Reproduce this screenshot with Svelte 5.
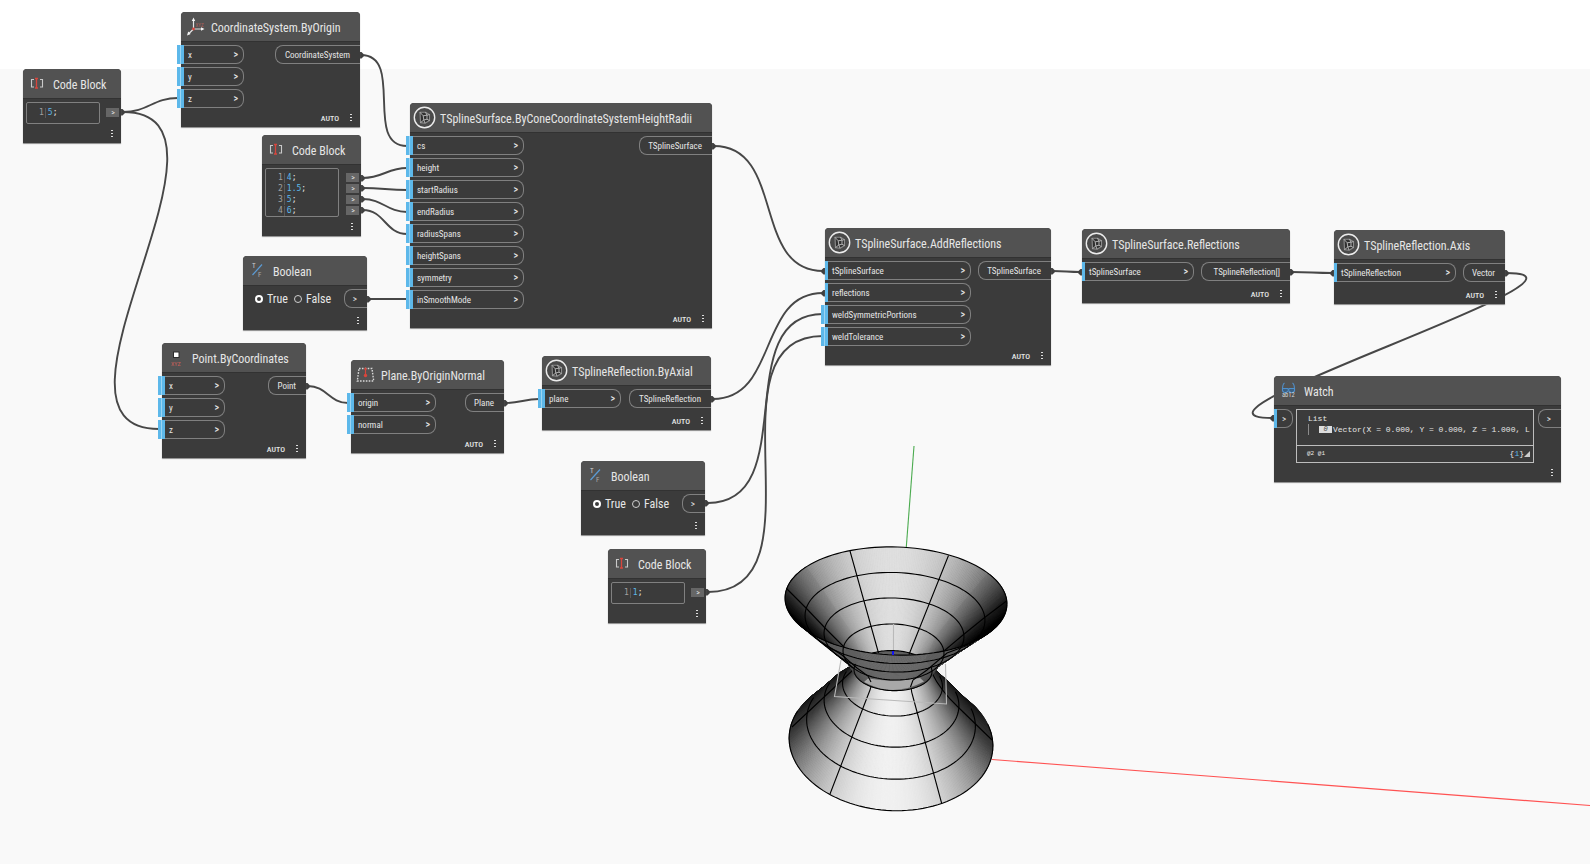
<script>
  const nodes = [
    { x: 181, y: 12, w: 179, title: 'CoordinateSystem.ByOrigin', icon: 'axes', ins: ['x', 'y', 'z'], inW: 63, out: 'CoordinateSystem', outW: 85 },
    { x: 410, y: 103, w: 302, title: 'TSplineSurface.ByConeCoordinateSystemHeightRadii', icon: 'tspline', ins: ['cs', 'height', 'startRadius', 'endRadius', 'radiusSpans', 'heightSpans', 'symmetry', 'inSmoothMode'], inW: 114, out: 'TSplineSurface', outW: 73 },
    { x: 162, y: 343, w: 144, title: 'Point.ByCoordinates', icon: 'point', ins: ['x', 'y', 'z'], inW: 63, out: 'Point', outW: 38 },
    { x: 351, y: 360, w: 153, title: 'Plane.ByOriginNormal', icon: 'plane', ins: ['origin', 'normal'], inW: 85, out: 'Plane', outW: 39 },
    { x: 542, y: 356, w: 169, title: 'TSplineReflection.ByAxial', icon: 'tspline', ins: ['plane'], inW: 79, out: 'TSplineReflection', outW: 82 },
    { x: 825, y: 228, w: 226, title: 'TSplineSurface.AddReflections', icon: 'tspline', ins: ['tSplineSurface', 'reflections', 'weldSymmetricPortions', 'weldTolerance'], inW: 146, required: 2, out: 'TSplineSurface', outW: 73 },
    { x: 1082, y: 229, w: 208, title: 'TSplineSurface.Reflections', icon: 'tspline', ins: ['tSplineSurface'], inW: 112, required: 1, out: 'TSplineReflection[]', outW: 89 },
    { x: 1334, y: 230, w: 171, title: 'TSplineReflection.Axis', icon: 'tspline', ins: ['tSplineReflection'], inW: 122, required: 1, out: 'Vector', outW: 42 },
    { x: 23, y: 69, w: 98, title: 'Code Block', icon: 'code', lines: ['5'] },
    { x: 262, y: 135, w: 99, title: 'Code Block', icon: 'code', lines: ['4', '1.5', '5', '6'] },
    { x: 608, y: 549, w: 98, title: 'Code Block', icon: 'code', lines: ['1'] },
    { x: 243, y: 256, w: 124, title: 'Boolean', icon: 'bool', bool: 'a' },
    { x: 581, y: 461, w: 124, title: 'Boolean', icon: 'bool', bool: 'b' },
    { x: 1274, y: 376, w: 287, title: 'Watch', icon: 'watch', watch: true }
  ];

  // x1, y1, x2, y2 of each connector
  const wires = [
    [123, 112, 178, 98], [123, 112, 159, 429], [361, 55, 407, 146],
    [363, 178, 407, 168], [363, 188, 407, 190], [363, 199, 407, 212], [363, 210, 407, 234],
    [368, 299, 407, 299], [308, 386, 348, 403], [506, 403, 539, 399],
    [714, 146, 823, 271], [713, 399, 823, 293], [708, 503, 823, 314], [708, 592, 823, 336],
    [1053, 271, 1080, 272], [1292, 272, 1332, 273], [1507, 273, 1272, 418]
  ];
  const wirePath = ([x1, y1, x2, y2]) => {
    const d = 0.43 * Math.hypot(x2 - x1, y2 - y1);
    return `M${x1} ${y1}C${x1 + d} ${y1} ${x2 - d} ${y2} ${x2} ${y2}`;
  };
  const starts = [[121, 112], [360, 55], [361, 178], [361, 188], [361, 199], [361, 210], [367, 299], [306, 386], [504, 403], [711, 399], [712, 146], [705, 503], [706, 592], [1051, 271], [1290, 272], [1505, 273]];
  const ends = [[825, 271], [825, 293], [1082, 272], [1334, 273], [1274, 418]];

  // Surface of revolution: rings as tilted ellipses (centre, radii, tilt in degrees)
  const rim = [896, 601, 111, 54, 2];
  const upper = [[895, 618, 90, 45.5, 2], [894, 635, 70, 37, 2], [893.5, 652, 50.5, 28, 2]];
  const waist = [893, 670.6, 39, 20, 2];
  const lower = [[892.5, 685, 50, 31, 3], [891.5, 703, 67.5, 44, 4], [891, 723, 84.5, 56, 4]];
  const base = [891, 742, 102, 68.5, 4];

  const at = ([cx, cy, rx, ry, slant], deg) => {
    const a = (deg * Math.PI) / 180, tilt = (slant * Math.PI) / 180;
    const u = rx * Math.cos(a), v = ry * Math.sin(a);
    return [cx + u * Math.cos(tilt) - v * Math.sin(tilt), cy + u * Math.sin(tilt) + v * Math.cos(tilt)];
  };
  const line = (pts) => 'M' + pts.map((p) => p[0].toFixed(2) + ' ' + p[1].toFixed(2)).join('L');
  const arc = (e, a0, a1) => {
    const pts = [];
    for (let a = a0; a <= a1; a += 3) pts.push(at(e, a));
    return line(pts);
  };
  const shade = (v) => {
    const g = Math.round(Math.max(0, Math.min(255, v)));
    return `rgb(${g},${g},${g})`;
  };
  const strips = (rings, from, to, tone) => {
    const out = [];
    const mid = (from + to) / 2;
    for (let d = from; d < to; d += 1) {
      for (let i = 1; i < rings.length; i++) {
        const a = rings[i - 1], b = rings[i];
        out.push({ k: Math.abs(d + 0.5 - mid), d: line([at(a, d), at(a, d + 1), at(b, d + 1), at(b, d)]) + 'Z', fill: shade(tone(d + 0.5)) });
      }
    }
    return out.sort((p, q) => q.k - p.k);
  };
  const cosd = (d) => Math.cos((d * Math.PI) / 180);
  const lowerStrips = strips([waist, ...lower, base], -38, 218, (d) => {
    const c = cosd(d - 89);
    return c > 0 ? 52 + 188 * Math.pow(c, 1.15) : 52 + 60 * c;
  });
  const outerStrips = strips([rim, ...upper, waist], -35, 215, (d) => 16 + 86 * Math.pow(Math.max(0, cosd(d - 90)), 0.6));
  const innerStrips = strips([rim, waist], 90, 450, (d) => {
    const c = cosd(d - 267);
    return c > 0 ? 22 + 200 * Math.pow(c, 1.2) : 22 + 80 * c;
  });
</script>

{#snippet icon(kind)}
  {#if kind === 'tspline'}
    <svg width="23" height="23" viewBox="0 0 23 23" aria-hidden="true">
      <circle cx="11.5" cy="11.5" r="10.2" fill="#4a4a4a" stroke="#ececec" stroke-width="1.4" />
      <path d="M7 6.300 12.500 6.200 16.500 8.600V14.600L12 17.200 7.500 16.600z" fill="#303030" stroke="#8c8c8c" stroke-width="1.100" stroke-linejoin="round" />
      <path d="M10.200 9.800 14 9.200V13.200L10.800 14zM7 6.300l3.200 3.500M12.500 6.200 14 9.200l2.500-.6M14 13.200l2.500 1.400M10.800 14 12 17.200M10.800 14l-3.300 2.600" fill="none" stroke="#bdbdbd" stroke-width=".9" />
    </svg>
  {:else if kind === 'code'}
    <svg width="23" height="23" viewBox="0 0 23 23" aria-hidden="true">
      <path d="M8 7.500H5.500V15H8M14 7.500h2.500V15H14" fill="none" stroke="#c9c9c9" stroke-width="1.100" />
      <path d="M9 6.500h3M9 16h3M10.500 6.500V16" fill="none" stroke="#d8453c" stroke-width="1.300" />
    </svg>
  {:else if kind === 'bool'}
    <svg width="23" height="23" viewBox="0 0 23 23" aria-hidden="true">
      <path d="M6.500 16 16 5.500" stroke="#5b9bd5" stroke-width="1.200" />
      <text x="6" y="9" font-size="7" fill="#cfcfcf">T</text>
      <text x="12" y="18" font-size="7" fill="#a9a9a9">F</text>
    </svg>
  {:else if kind === 'axes'}
    <svg width="23" height="23" viewBox="0 0 23 23" aria-hidden="true">
      <path d="M9.500 5v9H19M9.500 14l-5 5" fill="none" stroke="#e4e4e4" stroke-width="1.200" />
      <path d="M9.500 2.500l1.700 3.500H7.800zM20.500 14l-3.500 1.700v-3.400zM3 20.500l1.200-3.900 2.500 2.500z" fill="#f4f4f4" />
      <circle cx="9.500" cy="14" r="1.400" fill="#d8453c" />
      <text x="11.500" y="11.500" font-size="5" fill="#b0605a">XYZ</text>
    </svg>
  {:else if kind === 'point'}
    <svg width="23" height="23" viewBox="0 0 23 23" aria-hidden="true">
      <rect x="8.500" y="6" width="5.500" height="5.500" fill="#fff" stroke="#2c2c2c" stroke-width="1" />
      <text x="6" y="20" font-size="6" fill="#c8605a">XYZ</text>
    </svg>
  {:else if kind === 'plane'}
    <svg width="23" height="23" viewBox="0 0 23 23" aria-hidden="true">
      <path d="M5 5.500h13l1.700 12.500H3.300z" fill="none" stroke="#d8d8d8" stroke-width="1.400" stroke-dasharray="1.600 1.300" />
      <path d="M11.500 5v7" stroke="#d8453c" stroke-width="1.200" />
      <circle cx="11.500" cy="12.500" r="1.700" fill="#d8453c" />
      <path d="M10 6.800 11.500 4 13 6.800z" fill="#d8453c" />
    </svg>
  {:else if kind === 'watch'}
    <svg width="23" height="23" viewBox="0 0 23 23" aria-hidden="true">
      <path d="M7.500 4Q5.500 5 5.500 11M15.500 4q2 1 2 7" fill="none" stroke="#4f8fca" stroke-width="1.100" />
      <path d="M5.500 9.500h5l1 1 1-1h5v2.500l-1.500 1.500h-2.500l-2-2-2 2H7L5.500 12z" fill="#3c5f80" stroke="#4f8fca" stroke-width="1.100" />
      <text x="5" y="18" font-size="6.500" fill="#d4d4d4">ab12</text>
    </svg>
  {/if}
{/snippet}

<main>
  <svg class="scene" role="img" aria-label="Geometry preview">
    <path d="M841 656 834 696.500 946.500 704 945.500 660Z" fill="#f3f3f3" />
    <path d="M906.300 547 914 446" stroke="#4bab4f" stroke-width="1.100" />
    <line x1="992" y1="759.500" x2="100%" y2="805.500" stroke="#ff5252" stroke-width="1.100" />

    {#each lowerStrips as s}<path d={s.d} fill={s.fill} stroke={s.fill} stroke-width=".7" />{/each}
    <g class="edge">
      {#each lower as e}<path d={arc(e, -21, 201)} />{/each}
      <path d={arc(base, -21, 201)} />
      <path d="M830 794 863 708 870 690Q873 682 868 676L857 668M941.700 803.500 913 697Q909 685 914 680L927 670" />
      <path d="M792 727 823 698 853 670M992 740 958 707Q940 690 932 673" />
    </g>

    {#each outerStrips as s}<path d={s.d} fill={s.fill} stroke={s.fill} stroke-width=".7" />{/each}
    <path d="M868 678.500Q893 683 920 678L924 681.500Q893 698 864 682Z" fill="#a8a8a8" />
    <g class="edge">
      {#each [...upper, waist] as e}<path d={arc(e, -15, 195)} />{/each}
      <path d="M818 640 842 655 857 668 868 676 871 682M971 644 947 653 927 670 913 680 910.500 687M808 632 853 668" />
    </g>

    <clipPath id="rim"><path d={arc(rim, 0, 360)} /></clipPath>
    <g clip-path="url(#rim)">
      {#each innerStrips as s}<path d={s.d} fill={s.fill} stroke={s.fill} stroke-width=".7" />{/each}
      <path d={arc(waist, 0, 360)} fill="#5e5e5e" />
      <g class="edge">
        {#each [...upper, waist] as e}<path d={arc(e, 0, 360)} />{/each}
        <path d="M850 551 878.500 653M948.500 555.500 909 654.500M786 588 806 608 825 628 848 651M1006.500 601 984 618 963 635 938 656" />
      </g>
    </g>
    <path class="edge" d={arc(rim, 0, 360)} />
    <path d="M841 660 834.500 696.500 946.500 704 945.500 664M893.500 650V624" fill="none" stroke="#b9b9b9" stroke-width="1.100" />
    <rect x="892" y="651" width="2" height="4" fill="#1414f0" />
  </svg>

  <svg class="scene" aria-hidden="true">
    {#each wires as w}<path d={wirePath(w)} fill="none" stroke="#474747" stroke-width="1.900" />{/each}
    {#each starts as [x, y]}<path d="M{x} {y - 3}h1.500l2 2v2.500l-2 2h-1.500z" fill="#3f3f3f" />{/each}
    {#each ends as [x, y]}<path d="M{x} {y - 3}h-1.500l-2 2v2.500l2 2h1.500z" fill="#3f3f3f" />{/each}
  </svg>

  {#each nodes as n}
    <section class="node" style:left="{n.x}px" style:top="{n.y}px" style:width="{n.w}px">
      <header>
        {@render icon(n.icon)}
        <h2>{n.title}</h2>
      </header>
      <div class="body">
        {#if n.ins}
          <div class="ports">
            {#each n.ins as name, i}
              <button class="port in" class:optional={i >= (n.required ?? 0)} style:width="{n.inW}px"><span>{name}</span><b>&gt;</b></button>
            {/each}
          </div>
          <button class="port out" style:width="{n.outW}px">{n.out}</button>
        {:else if n.lines}
          <ol class="editor">
            {#each n.lines as value, i}
              <li><i>{i + 1}</i><code><b>{value}</b>;</code></li>
            {/each}
          </ol>
          <div class="taps">
            {#each n.lines as value}
              <button class="tap" aria-label="Output {value}">&gt;</button>
            {/each}
          </div>
        {:else if n.bool}
          <div class="choices">
            <label><input type="radio" name={n.bool} checked />True</label>
            <label><input type="radio" name={n.bool} />False</label>
          </div>
          <button class="port out plain" aria-label="Output">&gt;</button>
        {:else}
          <button class="port in small" aria-label="Input">&gt;</button>
          <div class="preview">
            <div class="list">
              <p>List</p>
              <p class="item"><em>0</em><span>Vector(X = 0.000, Y = 0.000, Z = 1.000, L</span></p>
            </div>
            <div class="levels"><span>@2 @1</span><span class="count">&#123;<b>1</b>&#125;<svg width="6" height="6" aria-hidden="true"><path d="M6 0V6H0Z" fill="#ccc" /></svg></span></div>
          </div>
          <button class="port out small" aria-label="Output">&gt;</button>
        {/if}
      </div>
      <footer>
        {#if n.ins}<span>AUTO</span>{/if}
        <button class="menu" aria-label="Node menu">
          <svg width="2" height="9" aria-hidden="true"><path d="M0 0h2v1H0zM0 3h2v1H0zM0 6h2v1H0z" fill="#dcdcdc" /></svg>
        </button>
      </footer>
    </section>
  {/each}
</main>

<style>
  :global(body) { margin: 0; }
  main {
    position: relative;
    min-height: 100vh;
    overflow: hidden;
    background: linear-gradient(#fff 69px, #f9f9f9 69px);
    font-family: "Roboto Condensed", Roboto, sans-serif;
    color: #e6e6e6;
  }
  .scene { position: absolute; inset: 0; width: 100%; height: 100%; }
  .edge, .edge path { fill: none; stroke: #000; stroke-width: 1.1; }
  button { font: inherit; color: inherit; background: none; border: 0; padding: 0; margin: 0; }

  .node {
    position: absolute;
    box-sizing: border-box;
    background: #3b3b3b;
    border-radius: 4px 4px 0 0;
    box-shadow: 0 1px 1px #8a8a8a;
  }
  header {
    display: flex;
    align-items: center;
    gap: 4px;
    height: 29px;
    padding-left: 3px;
    background: #525252;
    border-radius: 4px 4px 0 0;
  }
  header svg { flex: none; overflow: visible; }
  h2 { margin: 0; padding-top: 2px; font-size: 12px; line-height: 16px; font-weight: 400; white-space: nowrap; }

  .body { display: flex; justify-content: space-between; align-items: flex-start; min-height: 26px; padding-top: 3px; border-top: 1px solid #323232; box-sizing: border-box; }
  .ports { display: flex; flex-direction: column; gap: 3px; }
  .port {
    position: relative;
    display: flex;
    justify-content: space-between;
    align-items: center;
    box-sizing: border-box;
    height: 19px;
    border: 1px solid #808080;
    font-size: 9px;
    line-height: 12px;
    white-space: nowrap;
  }
  .in { border-left: 0; border-radius: 0 8px 8px 0; padding: 0 5px 0 7px; }
  .in::before { content: ""; position: absolute; left: 0; top: -1px; bottom: -1px; width: 3px; background: #5db8ea; }
  .in.optional::before { left: -4px; width: 7px; background: linear-gradient(90deg, #5db8ea 3px, #9bd4f3 3px, #9bd4f3 4px, #5db8ea 4px); }
  .out { border-right: 0; border-radius: 8px 0 0 8px; padding: 0 10px 0 8px; justify-content: flex-end; }
  .plain { width: 23px; }
  .small { width: 19px; }
  .small.out { width: 23px; }
  .small.in { padding: 0 7px 0 8px; }
  .port b { font-weight: 500; font-size: 10px; }

  .editor {
    flex: none;
    display: grid;
    gap: 1px;
    width: 74px;
    box-sizing: border-box;
    margin: 0 0 0 3px;
    padding: 4px 0 0 12px;
    list-style: none;
    border: 1px solid #808080;
    border-radius: 2px;
    font: 8px/10px "DejaVu Sans Mono", monospace;
  }
  .editor li { display: flex; height: 10px; }
  .editor i { font-style: normal; color: #a0a0a0; padding-right: 1px; border-right: 1px solid #5a5a5a; }
  .editor code { font: inherit; padding-left: 2px; }
  .editor b, .count b { font-weight: 400; color: #5db8ea; }
  .editor li:only-child { margin: 1px 0 5px; }
  .taps { display: grid; gap: 2px; padding: 5px 2px 0 0; }
  .taps:has(:only-child) { padding-top: 6px; }
  .tap { width: 13px; height: 9px; background: #666; font-size: 8px; line-height: 9px; text-align: right; padding-right: 4px; }

  .choices { display: flex; gap: 6px; padding: 1px 0 0 12px; font-size: 12px; line-height: 18px; }
  .choices label { display: flex; align-items: center; gap: 4px; }
  .choices input { appearance: none; width: 8px; height: 8px; margin: 0; border: 1px solid #cfcfcf; border-radius: 50%; }
  .choices input:checked { border: 2px solid #fff; }

  .preview { flex: 1; min-width: 0; margin: 0 4px 0 3px; border: 1px solid #bdbdbd; font: 8px/10px "Liberation Mono", monospace; white-space: nowrap; }
  .list { height: 35px; box-sizing: border-box; padding: 4px 0 0 11px; overflow: hidden; }
  .list p { margin: 0; }
  .item { display: flex; align-items: center; gap: 1px; }
  .item::before { content: ""; align-self: flex-start; width: 1px; height: 11px; margin-right: 9px; background: #8c8c8c; }
  .item em { width: 13px; height: 7px; background: #ddd; color: #444; font-size: 7px; line-height: 7px; text-align: center; }
  .levels { display: flex; justify-content: space-between; align-items: center; height: 16px; padding: 0 3px 0 10px; border-top: 1px solid #bdbdbd; font-size: 6px; }
  .count { display: flex; align-items: center; font-size: 8px; }

  footer { display: flex; justify-content: flex-end; align-items: center; gap: 11px; height: 19px; box-sizing: border-box; padding: 2px 8px 0 0; font-size: 8px; line-height: 10px; font-weight: 500; }
  .menu { display: flex; }
</style>
